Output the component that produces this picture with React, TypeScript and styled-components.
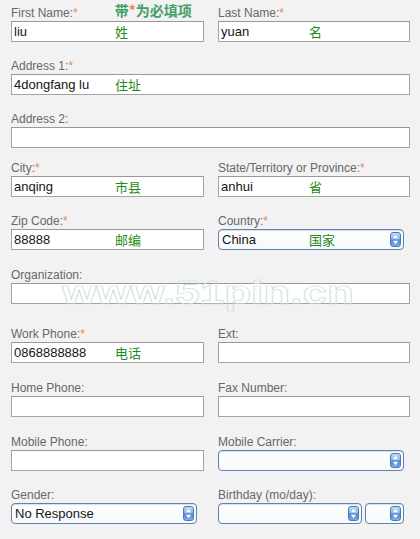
import React from "react";
import styled, { createGlobalStyle } from "styled-components";

const Global = createGlobalStyle`
  html, body { margin: 0; padding: 0; background: #f2f2f2; }
  body { font-family: "Liberation Sans", Arial, sans-serif; }
`;

const Page = styled.div`
  position: relative;
  width: 420px;
  height: 539px;
  box-sizing: border-box;
  padding: 6px 10px 0 11px;
  background: #f2f2f2;
  overflow: hidden;
`;

const Row = styled.div<{ $mt: number; $full?: boolean }>`
  display: grid;
  grid-template-columns: ${(p) => (p.$full ? "399px" : "193px 192px")};
  column-gap: 14px;
  margin-top: ${(p) => p.$mt}px;
`;

const Field = styled.div`
  display: flex;
  flex-direction: column;
`;

const Label = styled.div`
  display: flex;
  align-items: flex-start;
  height: 14px;
  margin-bottom: 1px;
  font-size: 12px;
  line-height: 14px;
  color: #686868;
  white-space: nowrap;
`;

const Star = styled.span`
  color: #e9884a;
`;

const HeaderNote = styled.span`
  margin-left: 37px;
  margin-top: -4px;
  font-family: "Noto Sans CJK SC", sans-serif;
  font-size: 14px;
  font-weight: 700;
  line-height: 16px;
  color: #43a068;
`;

const Box = styled.div`
  box-sizing: border-box;
  height: 21px;
  display: flex;
  align-items: center;
  padding: 0 2px;
  background: #fff;
  border: 1px solid #a4a4a4;
  border-top-color: #999;
`;

const Value = styled.span<{ $w: number }>`
  flex: none;
  width: ${(p) => p.$w}px;
  font-size: 13px;
  color: #151515;
  white-space: nowrap;
`;

const Note = styled.span`
  font-family: "Noto Sans CJK SC", sans-serif;
  font-size: 13px;
  line-height: 17px;
  color: #1f8a20;
  white-space: nowrap;
`;

const SelectBox = styled.div<{ $w: number }>`
  box-sizing: border-box;
  width: ${(p) => p.$w}px;
  height: 21px;
  display: flex;
  align-items: center;
  padding: 0 2px 0 3px;
  background: linear-gradient(#ffffff, #f7f9fc);
  border: 1px solid #5f82b2;
  border-radius: 4px;
  box-shadow: inset 0 1px 1px rgba(90, 120, 170, 0.25);
`;

const SelectRow = styled.div`
  display: flex;
  gap: 3px;
`;

const Grow = styled.div`
  flex: 1;
  min-width: 0;
  display: flex;
  align-items: center;
`;

const ArrowBtn = styled.span`
  flex: none;
  width: 11px;
  height: 15px;
  border-radius: 3px;
  background: linear-gradient(#c2dbf6 0%, #8ab4e6 45%, #4f86cf 55%, #7eaee6 100%);
  border: 1px solid #4a78b8;
  box-sizing: border-box;
  display: flex;
  align-items: center;
  justify-content: center;
`;

const Watermark = styled.div`
  position: absolute;
  left: 62px;
  top: 277px;
  font-family: "Liberation Sans", Arial, sans-serif;
  font-size: 44px;
  font-weight: 700;
  line-height: 44px;
  color: transparent;
  -webkit-text-stroke: 1px #c6e2d9;
  transform: scale(1, 0.74);
  transform-origin: left top;
  pointer-events: none;
  white-space: nowrap;
`;

const Arrows = () => (
  <svg width="7" height="11" viewBox="0 0 7 11">
    <path d="M3.5 0.8 L6.2 4.2 L0.8 4.2 Z" fill="#fff" />
    <path d="M3.5 10.2 L6.2 6.8 L0.8 6.8 Z" fill="#fff" />
  </svg>
);

type InputProps = { value?: string; note?: string; w?: number };
const Input = ({ value = "", note, w = 101 }: InputProps) => (
  <Box>
    <Value $w={w}>{value}</Value>
    {note && <Note>{note}</Note>}
  </Box>
);

type SelectProps = { value?: string; note?: string; w: number; vw?: number };
const Select = ({ value = "", note, w, vw = 87 }: SelectProps) => (
  <SelectBox $w={w}>
    <Grow>
      <Value $w={vw}>{value}</Value>
      {note && <Note>{note}</Note>}
    </Grow>
    <ArrowBtn>
      <Arrows />
    </ArrowBtn>
  </SelectBox>
);

const Lbl = ({ text, req, children }: { text: string; req?: boolean; children?: React.ReactNode }) => (
  <Label>
    {text}
    {req && <Star>*</Star>}
    {children}
  </Label>
);

export default function App() {
  return (
    <Page>
      <Global />
      <Row $mt={0}>
        <Field>
          <Lbl text="First Name:" req>
            <HeaderNote>
              带<Star>*</Star>为必填项
            </HeaderNote>
          </Lbl>
          <Input value="liu" note="姓" />
        </Field>
        <Field>
          <Lbl text="Last Name:" req />
          <Input value="yuan" note="名" w={88} />
        </Field>
      </Row>
      <Row $mt={17} $full>
        <Field>
          <Lbl text="Address 1:" req />
          <Input value="4dongfang lu" note="住址" />
        </Field>
      </Row>
      <Row $mt={17} $full>
        <Field>
          <Lbl text="Address 2:" />
          <Input />
        </Field>
      </Row>
      <Row $mt={13}>
        <Field>
          <Lbl text="City:" req />
          <Input value="anqing" note="市县" />
        </Field>
        <Field>
          <Lbl text="State/Territory or Province:" req />
          <Input value="anhui" note="省" w={88} />
        </Field>
      </Row>
      <Row $mt={17}>
        <Field>
          <Lbl text="Zip Code:" req />
          <Input value="88888" note="邮编" />
        </Field>
        <Field>
          <Lbl text="Country:" req />
          <Select value="China" note="国家" w={186} />
        </Field>
      </Row>
      <Row $mt={18} $full>
        <Field>
          <Lbl text="Organization:" />
          <Input />
        </Field>
      </Row>
      <Row $mt={23}>
        <Field>
          <Lbl text="Work Phone:" req />
          <Input value="0868888888" note="电话" />
        </Field>
        <Field>
          <Lbl text="Ext:" />
          <Input />
        </Field>
      </Row>
      <Row $mt={18}>
        <Field>
          <Lbl text="Home Phone:" />
          <Input />
        </Field>
        <Field>
          <Lbl text="Fax Number:" />
          <Input />
        </Field>
      </Row>
      <Row $mt={18}>
        <Field>
          <Lbl text="Mobile Phone:" />
          <Input />
        </Field>
        <Field>
          <Lbl text="Mobile Carrier:" />
          <Select w={186} />
        </Field>
      </Row>
      <Row $mt={17}>
        <Field>
          <Lbl text="Gender:" />
          <Select value="No Response" w={186} vw={150} />
        </Field>
        <Field>
          <Lbl text="Birthday (mo/day):" />
          <SelectRow>
            <Select w={144} />
            <Select w={39} vw={10} />
          </SelectRow>
        </Field>
      </Row>
      <Watermark>www.51pin.cn</Watermark>
    </Page>
  );
}
